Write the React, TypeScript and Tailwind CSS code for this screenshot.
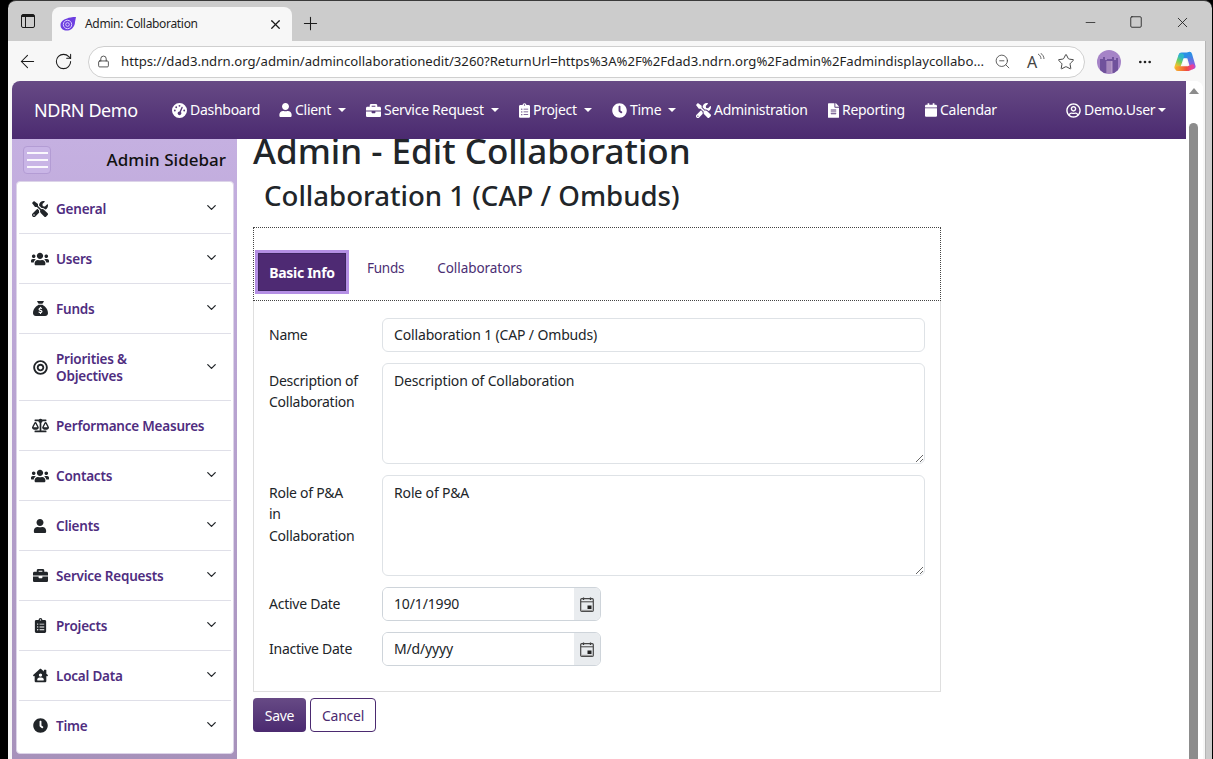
import type { ReactNode } from "react";
import {
  ArrowLeft,
  ChevronDown,
  Lock,
  Minus,
  MoreHorizontal,
  Plus,
  RotateCw,
  Square,
  Star,
  X,
  ZoomOut,
} from "lucide-react";
import {
  FaBalanceScale,
  FaBriefcase,
  FaBullseye,
  FaCalendar,
  FaClipboardList,
  FaClock,
  FaFileAlt,
  FaHouseUser,
  FaRegUserCircle,
  FaTools,
  FaUser,
  FaUsers,
} from "react-icons/fa";
import { FaGaugeHigh, FaSackDollar } from "react-icons/fa6";

const font = "font-['Noto_Sans','Open_Sans',sans-serif]";

function Caret({ className }: { className?: string }) {
  return (
    <span
      className={`inline-block h-0 w-0 border-x-[4.5px] border-t-[4.5px] border-x-transparent border-t-white ${className ?? "ml-[7px]"}`}
    />
  );
}

function NavItem({
  icon,
  label,
  caret,
  className,
  iconBox = "w-[15px]",
  caretClass,
}: {
  icon: ReactNode;
  label: string;
  caret?: boolean;
  className: string;
  iconBox?: string;
  caretClass?: string;
}) {
  return (
    <div className={`flex items-center ${className}`}>
      <span className={`flex shrink-0 justify-center text-[15px] ${iconBox}`}>{icon}</span>
      <span className="ml-[3px] -translate-y-[1px] whitespace-nowrap tracking-[-0.28px]">{label}</span>
      {caret && <Caret className={caretClass} />}
    </div>
  );
}

function SideItem({
  icon,
  label,
  tall,
  noChevron,
  last,
}: {
  icon: ReactNode;
  label: ReactNode;
  tall?: boolean;
  noChevron?: boolean;
  last?: boolean;
}) {
  return (
    <div
      className={`mx-[2px] flex items-center pl-[12px] pr-[12px] ${tall ? "h-[67px]" : "h-[50px]"} ${
        last ? "pb-[1px]" : "border-b border-[#dfdfe8]"
      }`}
    >
      <span className="flex w-[18px] shrink-0 justify-center text-[16px] text-[#212529]">{icon}</span>
      <span className="ml-[7px] flex-1 pt-[2px] text-[13.5px] leading-[17px] font-semibold tracking-[-0.22px] text-[#4f2d7f]">
        {label}
      </span>
      {!noChevron && <ChevronDown size={15} strokeWidth={2} className="-mt-[2px] text-[#212529]" />}
    </div>
  );
}

function CalendarGlyph() {
  return (
    <svg width="14" height="15" viewBox="0 0 14 15" fill="none">
      <path d="M3.500 0.500v2.500M10.500 0.500v2.500" stroke="#333" strokeWidth="1.300" />
      <rect x="0.700" y="1.700" width="12.600" height="12.600" rx="1" stroke="#444" strokeWidth="1.200" />
      <rect x="1" y="4.300" width="12" height="1" fill="#444" />
      <rect x="7.500" y="8.500" width="4" height="3.500" fill="#222" />
      <rect x="1" y="12.800" width="12" height="1.300" fill="#999" />
    </svg>
  );
}

function DateField({ value }: { value: string }) {
  return (
    <div className="flex h-[34px] w-[219px] overflow-hidden rounded-[6px] border border-[#ced4da]">
      <input
        readOnly
        value={value}
        className="min-w-0 flex-1 bg-white pb-[2px] pl-[11px] text-[14px] tracking-[-0.15px] text-[#212529] outline-none"
      />
      <span className="flex w-[26px] items-center justify-center bg-[#e9ecef]">
        <CalendarGlyph />
      </span>
    </div>
  );
}

function Row({ label, children }: { label: ReactNode; children: ReactNode }) {
  return (
    <div className="flex">
      <div className="w-[128px] shrink-0 pl-[15px] text-[14px] leading-[21.3px] tracking-[-0.25px] text-[#212529]">
        {label}
      </div>
      {children}
    </div>
  );
}

function TabFavicon() {
  return (
    <svg width="16" height="16" viewBox="0 0 16 16" fill="none">
      <path d="M16 1 C12 1 9 1.500 7 2.500 C3 3.500 0.500 6 0.500 9 C0.500 13 4 15 8 14.500 C12 14 15 10 15 6 Z" fill="#6d3fe0" />
      <circle cx="7.500" cy="8.500" r="4.200" stroke="#d9ccff" strokeWidth="1" />
      <circle cx="7.500" cy="8.500" r="1.800" stroke="#d9ccff" strokeWidth="1" />
    </svg>
  );
}

function Avatar() {
  return (
    <svg width="24" height="24" viewBox="0 0 24 24">
      <circle cx="12" cy="12" r="12" fill="#a583c7" />
      <path d="M3 20V9h3V7h2v3h2v-1h5V7h2v3h2V8h2v12l-4 3H7z" fill="#70529c" />
      <rect x="9.500" y="11" width="6" height="12" fill="#b79ac9" />
      <path d="M11 11v12M13 11v12" stroke="#8a6fa8" strokeWidth="0.700" />
    </svg>
  );
}

function CopilotLogo() {
  return (
    <svg width="23" height="23" viewBox="0 0 24 24" fill="none">
      <defs>
        <linearGradient id="cpRight" x1="0" y1="0" x2="0" y2="1">
          <stop offset="0" stopColor="#2b8fe6" />
          <stop offset="1" stopColor="#9a55e0" />
        </linearGradient>
        <linearGradient id="cpLeft" x1="0.6" y1="0" x2="0.4" y2="1">
          <stop offset="0" stopColor="#2fb7c9" />
          <stop offset="0.45" stopColor="#6fcf5a" />
          <stop offset="1" stopColor="#f5c02f" />
        </linearGradient>
        <linearGradient id="cpBottom" x1="0" y1="0" x2="1" y2="0">
          <stop offset="0" stopColor="#f5a02f" />
          <stop offset="0.6" stopColor="#f0503c" />
          <stop offset="1" stopColor="#e6409f" />
        </linearGradient>
      </defs>
      <path d="M9 5.500h7" stroke="#2b8fe6" strokeWidth="6" strokeLinecap="round" />
      <path d="M17 5l3.500 12" stroke="url(#cpRight)" strokeWidth="6" strokeLinecap="round" />
      <path d="M8.500 6.500L4.500 18" stroke="url(#cpLeft)" strokeWidth="6" strokeLinecap="round" />
      <path d="M5 19.500h11l4-2" stroke="url(#cpBottom)" strokeWidth="5" strokeLinecap="round" strokeLinejoin="round" />
      <path d="M11.500 9h2l1.500 6h-5z" fill="#ffffff" />
    </svg>
  );
}

export default function App() {
  return (
    <div className={`flex h-[759px] w-[1213px] overflow-hidden bg-black ${font}`}>
      <div className="ml-[8px] flex h-full w-[1204px] flex-col overflow-hidden rounded-tl-[8px] rounded-tr-[8px] border-t border-[#3a3a3a] bg-[#cccccc]">
        {/* tab strip */}
        <div className="flex h-[40px] shrink-0 items-end">
          <div className="flex h-[33px] w-[44px] items-center justify-center self-center pr-[4px]">
            <span className="flex h-[14px] w-[14px] flex-col rounded-[2px] border-[1.5px] border-[#1a1a1a]">
              <span className="h-[3px] w-full bg-[#1a1a1a]" />
              <span className="h-full w-[4px] border-r-[1.5px] border-[#1a1a1a]" />
            </span>
          </div>
          <div className="flex h-[34px] w-[240px] items-center rounded-t-[8px] bg-[#f7f7f7] pl-[8px] pr-[9px]">
            <TabFavicon />
            <span className="ml-[9px] flex-1 text-[12px] tracking-[-0.32px] text-[#1f1f1f]">Admin: Collaboration</span>
            <X size={15} strokeWidth={2} className="text-[#1a1a1a]" />
          </div>
          <div className="flex h-[34px] w-[36px] items-center justify-center self-center pt-[4px]">
            <Plus size={21} strokeWidth={1.200} className="text-[#1a1a1a]" />
          </div>
          <div className="ml-auto flex h-[34px] items-center self-start pt-[8px]">
            <span className="flex w-[46px] justify-center">
              <Minus size={15} strokeWidth={1.200} className="text-[#1a1a1a]" />
            </span>
            <span className="flex w-[46px] justify-center">
              <Square size={14} strokeWidth={1.400} className="text-[#1a1a1a]" />
            </span>
            <span className="flex w-[46px] justify-center">
              <X size={17} strokeWidth={1.200} className="text-[#1a1a1a]" />
            </span>
            <span className="w-[7px]" />
          </div>
        </div>

        {/* window body */}
        <div className="flex min-h-0 flex-1">
          <div className="flex w-[1197px] shrink-0 flex-col bg-[#f7f7f7]">
            {/* toolbar */}
            <div className="flex h-[40px] shrink-0 items-center pt-[1px] pl-[9px]">
              <ArrowLeft size={21} strokeWidth={1.200} className="text-[#1a1a1a]" />
              <RotateCw size={19} strokeWidth={1.300} className="ml-[16px] text-[#1a1a1a]" />
              <div className="ml-[15px] flex h-[32px] w-[997px] items-center rounded-full border border-[#cfcfcf] bg-white pl-[8px] pr-[9px]">
                <Lock size={13} strokeWidth={1.500} className="text-[#333]" />
                <span className="ml-[11px] w-[864px] overflow-hidden text-[13.170px] whitespace-nowrap text-[#1f1f1f]">
                  https://dad3.ndrn.org/admin/admincollaborationedit/3260?ReturnUrl=https%3A%2F%2Fdad3.ndrn.org%2Fadmin%2Fadmindisplaycollabo...
                </span>
                <ZoomOut size={17} strokeWidth={1.200} className="ml-[9px] text-[#444]" />
                <span className="relative ml-[16px] flex w-[17px] text-[16px] leading-none text-[#444]">
                  A
                  <svg className="absolute top-[-1px] left-[9px]" width="9" height="10" viewBox="0 0 9 10" fill="none">
                    <path d="M2 1c2 1 3 3 3 5M4.500 0c2 1.500 3.500 3.500 3.500 6" stroke="#555" strokeWidth="0.900" />
                  </svg>
                </span>
                <Star size={18} strokeWidth={1.200} className="ml-[13px] text-[#333]" />
              </div>
              <span className="ml-[12px] flex w-[24px]">
                <Avatar />
              </span>
              <MoreHorizontal size={16} strokeWidth={2} className="ml-[16px] text-[#222]" />
              <span className="ml-[20px]">
                <CopilotLogo />
              </span>
            </div>

            {/* page viewport */}
            <div className="mr-[2px] ml-[4px] flex min-h-0 flex-1 overflow-hidden rounded-tl-[8px] rounded-tr-[8px] bg-white">
              <div className="flex min-w-0 flex-1 flex-col">
                <nav className="relative z-10 flex h-[58px] shrink-0 items-center bg-gradient-to-b from-[#674a85] to-[#4b2a70] text-[14px] text-white">
                  <span className="ml-[22px] w-[138px] shrink-0 text-[18px] tracking-[-0.4px]">NDRN Demo</span>
                  <NavItem className="w-[107px]" icon={<FaGaugeHigh />} label="Dashboard" />
                  <NavItem className="w-[87px]" iconBox="w-[13px]" icon={<FaUser className="text-[14px]" />} label="Client" caret />
                  <NavItem className="w-[153px]" icon={<FaBriefcase />} label="Service Request" caret />
                  <NavItem className="w-[93px]" iconBox="w-[11px]" icon={<FaClipboardList className="text-[15px]" />} label="Project" caret />
                  <NavItem className="w-[84px]" icon={<FaClock />} label="Time" caret />
                  <NavItem className="w-[132px]" icon={<FaTools />} label="Administration" />
                  <NavItem className="w-[97px]" iconBox="w-[11px]" icon={<FaFileAlt className="text-[15px]" />} label="Reporting" />
                  <NavItem className="w-[141px]" iconBox="w-[12px]" icon={<FaCalendar className="text-[14px]" />} label="Calendar" />
                  <NavItem className="" icon={<FaRegUserCircle />} label="Demo.User" caret caretClass="ml-[3px]" />
                </nav>

                <div className="flex min-h-0 flex-1">
                  <aside className="flex w-[225px] shrink-0 flex-col bg-gradient-to-b from-[#c5b0e1] to-[#a792bb]">
                    <div className="flex h-[42px] shrink-0 items-center pr-[11px] pl-[11px]">
                      <div className="flex h-[28px] w-[28px] flex-col items-center justify-center gap-[5px] rounded-[4px] border border-[#b39cd4] bg-[#c9b5e6]">
                        <span className="h-[2px] w-[21px] bg-white/90" />
                        <span className="h-[2px] w-[21px] bg-white/90" />
                        <span className="h-[2px] w-[21px] bg-white/90" />
                      </div>
                      <span className="ml-auto text-[17px] font-medium tracking-[0.02px] text-[#111]">Admin Sidebar</span>
                    </div>
                    <div className="mr-[3px] ml-[4px] h-[573px] shrink-0 rounded-[4px] border border-[#dcd4e8] bg-white pt-[2px]">
                      <SideItem icon={<FaTools />} label="General" />
                      <SideItem icon={<FaUsers className="text-[18px]" />} label="Users" />
                      <SideItem icon={<FaSackDollar className="text-[15px]" />} label="Funds" />
                      <SideItem
                        tall
                        icon={<FaBullseye className="text-[15px]" />}
                        label={
                          <>
                            Priorities &amp;
                            <br />
                            Objectives
                          </>
                        }
                      />
                      <SideItem noChevron icon={<FaBalanceScale className="text-[17px]" />} label="Performance Measures" />
                      <SideItem icon={<FaUsers className="text-[18px]" />} label="Contacts" />
                      <SideItem icon={<FaUser className="text-[14px]" />} label="Clients" />
                      <SideItem icon={<FaBriefcase className="text-[15px]" />} label="Service Requests" />
                      <SideItem icon={<FaClipboardList className="text-[15px]" />} label="Projects" />
                      <SideItem icon={<FaHouseUser className="text-[15px]" />} label="Local Data" />
                      <SideItem last icon={<FaClock className="text-[15px]" />} label="Time" />
                    </div>
                  </aside>

                  <main className="min-w-0 flex-1 pl-[16px]">
                    <div className="w-[688px]">
                      <h1 className="-mt-[10px] text-[35px] leading-[43px] font-medium whitespace-nowrap text-[#212529]">
                        Admin - Edit Collaboration
                      </h1>
                      <h2 className="mt-[4px] pl-[11px] text-[27.600px] leading-[38px] font-medium whitespace-nowrap text-[#212529]">
                        Collaboration 1 (CAP / Ombuds)
                      </h2>

                      <div className="mt-[13px] flex h-[74px] border border-dotted border-[#444] pt-[22px] pl-[1px]">
                        <div className="flex h-[44px] w-[94px] items-center justify-center border-[3px] border-[#b48fe4] bg-[#4e2a73] text-[14px] font-bold tracking-[-0.3px] text-white shadow-[inset_0_0_0_1px_#3d2560]">
                          Basic Info
                        </div>
                        <span className="ml-[18px] pt-[8px] text-[13.500px] tracking-[-0.25px] text-[#4b2e73]">Funds</span>
                        <span className="ml-[33px] pt-[8px] text-[13.500px] tracking-[-0.05px] text-[#4b2e73]">Collaborators</span>
                      </div>

                      <div className="flex h-[391px] flex-col gap-[11px] border-x border-b border-[#dfdfdf] pt-[17px]">
                        <Row label={<span className="block pt-[6px]">Name</span>}>
                          <input
                            readOnly
                            value="Collaboration 1 (CAP / Ombuds)"
                            className="h-[34px] w-[543px] rounded-[6px] border border-[#dee2e6] bg-white pb-[2px] pl-[11px] text-[14px] tracking-[-0.15px] text-[#212529] outline-none"
                          />
                        </Row>
                        <Row
                          label={
                            <span className="block pt-[7px]">
                              Description of
                              <br />
                              Collaboration
                            </span>
                          }
                        >
                          <textarea
                            readOnly
                            value="Description of Collaboration"
                            className="h-[101px] w-[543px] rounded-[6px] border border-[#dee2e6] bg-white px-[11px] py-[6px] text-[14px] leading-[21px] tracking-[-0.15px] text-[#212529] outline-none"
                          />
                        </Row>
                        <Row
                          label={
                            <span className="block pt-[7px]">
                              Role of P&amp;A
                              <br />
                              in
                              <br />
                              Collaboration
                            </span>
                          }
                        >
                          <textarea
                            readOnly
                            value="Role of P&A"
                            className="h-[101px] w-[543px] rounded-[6px] border border-[#dee2e6] bg-white px-[11px] py-[6px] text-[14px] leading-[21px] tracking-[-0.15px] text-[#212529] outline-none"
                          />
                        </Row>
                        <Row label={<span className="block pt-[6px]">Active Date</span>}>
                          <DateField value="10/1/1990" />
                        </Row>
                        <Row label={<span className="block pt-[6px]">Inactive Date</span>}>
                          <DateField value="M/d/yyyy" />
                        </Row>
                      </div>

                      <div className="mt-[6px] flex gap-[4px]">
                        <button className="h-[34px] w-[53px] rounded-[4px] bg-gradient-to-b from-[#674a85] to-[#4b2a70] text-[14px] tracking-[-0.25px] text-white">
                          Save
                        </button>
                        <button className="h-[34px] w-[66px] rounded-[4px] border border-[#4b2a70] bg-white text-[14px] tracking-[-0.25px] text-[#4b2a70]">
                          Cancel
                        </button>
                      </div>
                    </div>
                  </main>
                </div>
              </div>

              {/* page scrollbar */}
              <div className="flex w-[17px] shrink-0 flex-col items-center bg-white pt-[7px] pr-[2px]">
                <span className="h-0 w-0 border-x-[5px] border-b-[6px] border-x-transparent border-b-[#8c8c8c]" />
                <span className="mt-[29px] w-[9px] flex-1 rounded-t-full bg-[#8c8c8c]" />
              </div>
            </div>
          </div>
          <div className="w-[1px] shrink-0 bg-[#b5b5b5]" />
          <div className="flex-1 bg-[#cccccc]" />
        </div>
      </div>
    </div>
  );
}
